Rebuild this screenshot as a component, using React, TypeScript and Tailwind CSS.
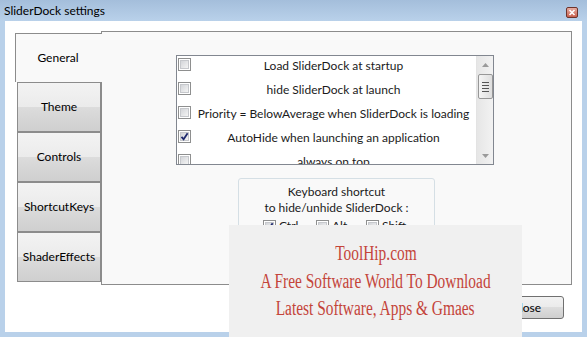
import React from 'react';

const ui = { fontFamily: 'Lato, "Noto Sans", sans-serif' };

const Check: React.FC<{ checked?: boolean }> = ({ checked }) => (
  <div className="w-[13px] h-[13px] shrink-0 border border-[#8e8f8f] bg-white p-px">
    <div className="relative w-full h-full border border-[#c6c8cc] bg-[linear-gradient(135deg,#d3d5d9,#f4f4f4)]">
      {checked && (
        <svg viewBox="0 0 9 9" className="absolute -left-px -top-px w-[9px] h-[9px]">
          <path d="M1.5 4.8 L3.6 7.3 L7.6 1.2" fill="none" stroke="#1f2a6e" strokeWidth="1.8" />
        </svg>
      )}
    </div>
  </div>
);

const options = [
  { label: 'Load SliderDock at startup', checked: false },
  { label: 'hide SliderDock at launch', checked: false },
  { label: 'Priority = BelowAverage when SliderDock is loading', checked: false },
  { label: 'AutoHide when launching an application', checked: true },
  { label: 'always on top', checked: false },
];

const tabs = ['Theme', 'Controls', 'ShortcutKeys', 'ShaderEffects'];

export default function App() {
  return (
    <div className="relative w-[587px] h-[337px] overflow-hidden bg-[#b9d1ea] text-[12px] text-[#1b1b1b]" style={ui}>
      {/* title bar */}
      <div className="h-[21px] flex items-center justify-between pl-[4px] pr-[9px] bg-[linear-gradient(#a4bedb,#b9d1ea)]">
        <span className="text-[12px] leading-none text-black">SliderDock settings</span>
        <div className="w-[12px] h-[11px] mt-[3px] rounded-[2px] border border-[#6e342b] bg-[linear-gradient(#e6aca1,#c9604e)] flex items-center justify-center">
          <svg viewBox="0 0 8 7" className="w-[8px] h-[7px]">
            <path d="M1.5 1 L6.5 6 M6.5 1 L1.5 6" stroke="#ffffff" strokeWidth="1.6" />
          </svg>
        </div>
      </div>

      {/* client area */}
      <div className="ml-[5px] w-[577px] h-[311px] bg-white pt-[10px] pl-[10px] flex flex-col">
        <div className="flex h-[254px]">
          <div className="w-[86px] pt-[2px] flex flex-col">
            <div className="relative z-10 w-[87px] h-[49px] border-l border-t border-[#8c8c8c] bg-[#f9f9f9] flex items-center justify-center pr-[2px] text-black">
              General
            </div>
            {tabs.map((t) => (
              <div
                key={t}
                className="ml-[2px] w-[84px] h-[50px] border border-[#8c8c8c] bg-[linear-gradient(#f3f3f3,#ebebeb_50%,#dcdcdc_50%,#cfcfcf)] flex items-center justify-center text-black"
              >
                {t}
              </div>
            ))}
          </div>

          <div className="w-[471px] h-[254px] border border-[#8c8c8c] bg-[#f9f9f9] flex flex-col">
            {/* options list */}
            <div className="ml-[74px] mt-[23px] w-[318px] h-[110px] border border-[#828790] bg-white flex overflow-hidden">
              <div className="flex-1 flex flex-col pl-[1px]">
                {options.map((o) => (
                  <div key={o.label} className="h-[24px] shrink-0 flex items-start pt-[2px]">
                    <Check checked={o.checked} />
                    <span className="flex-1 text-center leading-[16px] whitespace-nowrap">{o.label}</span>
                  </div>
                ))}
              </div>
              <div className="w-[17px] h-full bg-[linear-gradient(90deg,#e6e6e6,#f2f2f2)] border-l border-[#e3e3e3] flex flex-col items-center">
                <div className="h-[17px] flex items-center justify-center">
                  <svg viewBox="0 0 7 4" className="w-[7px] h-[4px]">
                    <path d="M0 4 L3.5 0 L7 4 Z" fill="#9a9a9a" />
                  </svg>
                </div>
                <div className="mt-[1px] w-[15px] h-[25px] rounded-[2px] border border-[#979797] bg-[linear-gradient(90deg,#f4f4f4,#dedede)] flex flex-col items-center justify-center gap-[2px]">
                  <div className="w-[7px] h-px bg-[#555]" />
                  <div className="w-[7px] h-px bg-[#555]" />
                  <div className="w-[7px] h-px bg-[#555]" />
                  <div className="w-[7px] h-px bg-[#555]" />
                </div>
                <div className="flex-1" />
                <div className="h-[17px] flex items-center justify-center">
                  <svg viewBox="0 0 7 4" className="w-[7px] h-[4px]">
                    <path d="M0 0 L3.5 4 L7 0 Z" fill="#9a9a9a" />
                  </svg>
                </div>
              </div>
            </div>

            {/* keyboard shortcut group */}
            <div className="ml-[136px] mt-[13px] w-[197px] h-[66px] rounded-[3px] border border-[#d5dfe5] pt-[5px] flex flex-col items-center">
              <span className="leading-[16px]">Keyboard shortcut</span>
              <span className="leading-[16px]">to hide/unhide SliderDock :</span>
              <div className="self-start pl-[24px] mt-[1px] flex">
                <div className="w-[53px] flex items-center gap-[3px]"><Check checked /><span>Ctrl</span></div>
                <div className="w-[50px] flex items-center gap-[3px]"><Check /><span>Alt</span></div>
                <div className="flex items-center gap-[3px]"><Check /><span>Shift</span></div>
              </div>
            </div>
          </div>
        </div>

        <div className="flex justify-end pr-[18px] mt-[11px]">
          <button className="w-[75px] h-[23px] rounded-[3px] border border-[#707070] bg-[linear-gradient(#f2f2f2,#ebebeb_50%,#dddddd_50%,#cfcfcf)] text-[12px] text-black">
            Close
          </button>
        </div>
      </div>

      {/* watermark overlay */}
      <div
        className="absolute left-[229px] top-[225px] w-[293px] h-[112px] bg-[#f0f0f0] flex flex-col items-center pt-[15px] text-[20px] leading-[27.5px] text-[#c4443a]"
        style={{ fontFamily: '"Liberation Serif", serif' }}
      >
        <span className="scale-x-[0.77] whitespace-nowrap">ToolHip.com</span>
        <span className="scale-x-[0.77] whitespace-nowrap">A Free Software World To Download</span>
        <span className="scale-x-[0.77] whitespace-nowrap">Latest Software, Apps &amp; Gmaes</span>
      </div>
    </div>
  );
}
